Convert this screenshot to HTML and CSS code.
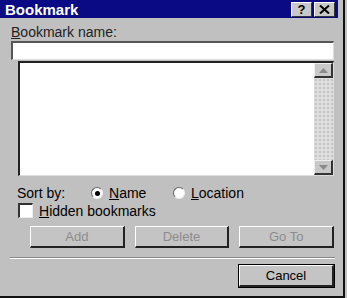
FILE: index.html
```html
<!DOCTYPE html>
<html lang="en">
  <head>
    <meta charset="UTF-8" />
    <title>Bookmark</title>
    <link rel="stylesheet" href="styles.css">
  </head>
  <body>
    <div class="dialog">
      <div class="title-bar">
        <span class="title">Bookmark</span>
        <div class="title-buttons">
          <span class="tb-btn">?</span>
          <span class="tb-btn close">
            <svg width="11" height="9" viewBox="0 0 11 9"><path d="M1 0.5 L10 8.5 M10 0.5 L1 8.5" stroke="#000" stroke-width="2"/></svg>
          </span>
        </div>
      </div>

      <div class="body">
        <label class="label"><u>B</u>ookmark name:</label>
        <div class="text-field"></div>

        <div class="list-box">
          <div class="list-area"></div>
          <div class="scrollbar">
            <span class="sb-btn">
              <svg width="9" height="5" viewBox="0 0 9 5"><path d="M0 5 L4.5 0 L9 5 Z" fill="#8a8a8a"/></svg>
            </span>
            <span class="sb-track"></span>
            <span class="sb-btn">
              <svg width="9" height="5" viewBox="0 0 9 5"><path d="M0 0 L4.5 5 L9 0 Z" fill="#8a8a8a"/></svg>
            </span>
          </div>
        </div>

        <div class="sort-row">
          <span class="sort-label">Sort by:</span>
          <span class="radio checked"></span>
          <span class="radio-label"><u>N</u>ame</span>
          <span class="radio"></span>
          <span class="radio-label"><u>L</u>ocation</span>
        </div>

        <div class="check-row">
          <span class="checkbox"></span>
          <span><u>H</u>idden bookmarks</span>
        </div>

        <div class="button-row">
          <span class="btn disabled">Add</span>
          <span class="btn disabled">Delete</span>
          <span class="btn disabled">Go To</span>
        </div>

        <div class="separator"></div>

        <div class="cancel-row">
          <span class="btn default">Cancel</span>
        </div>
      </div>
    </div>
  </body>
</html>
```

FILE: styles.css
```css
body {
  margin: 0;
  background-color: #c0c0c0;
  font-family: "Liberation Sans", Arial, sans-serif;
  font-size: 14px;
  color: #000;
}

.dialog {
  width: 343px;
  height: 296px;
  border-right: 2px solid #111;
  border-bottom: 2px solid #111;
  box-sizing: content-box;
  overflow: hidden;
}

.title-bar {
  width: 338px;
  height: 18px;
  background-color: #0a0a84;
  display: flex;
  align-items: center;
  justify-content: space-between;
}

.title {
  color: #fff;
  font-weight: bold;
  font-size: 15px;
  padding-left: 5px;
}

.title-buttons {
  display: flex;
  gap: 2px;
  padding-right: 3px;
}

.tb-btn {
  width: 21px;
  height: 15px;
  background-color: #c8c8c8;
  border-top: 1px solid #fff;
  border-left: 1px solid #fff;
  border-right: 1px solid #333;
  border-bottom: 1px solid #333;
  box-sizing: border-box;
  display: flex;
  align-items: center;
  justify-content: center;
  font-weight: bold;
  font-size: 13px;
  line-height: 1;
}

.body {
  padding: 6px 11px 0 11px;
  width: 323px;
}

.label {
  display: block;
  height: 17px;
  line-height: 17px;
  color: #222;
}

.text-field {
  height: 19px;
  background: #fff;
  border-top: 2px solid #555;
  border-left: 2px solid #555;
  border-right: 1px solid #ddd;
  border-bottom: 1px solid #ddd;
  box-sizing: border-box;
}

.list-box {
  margin: 1px 0 0 7px;
  height: 115px;
  display: flex;
  background: #fff;
  border-top: 2px solid #222;
  border-left: 2px solid #222;
  border-right: 1px solid #ddd;
  border-bottom: 1px solid #ddd;
  box-sizing: border-box;
}

.list-area {
  flex: 1;
}

.scrollbar {
  width: 19px;
  display: flex;
  flex-direction: column;
  background-color: #dcdcdc;
}

.sb-btn {
  height: 15px;
  background-color: #c8c8c8;
  border-top: 1px solid #eee;
  border-left: 1px solid #eee;
  border-right: 2px solid #333;
  border-bottom: 2px solid #333;
  box-sizing: border-box;
  display: flex;
  align-items: center;
  justify-content: center;
}

.sb-track {
  flex: 1;
  background-image: radial-gradient(#c4c4c4 30%, transparent 31%);
  background-size: 4px 4px;
  background-color: #dedede;
}

.sort-row {
  display: flex;
  align-items: center;
  height: 18px;
  margin: 8px 0 0 6px;
}

.sort-label {
  width: 74px;
}

.radio {
  width: 12px;
  height: 12px;
  border-radius: 50%;
  background: #fff;
  border: 1px solid #666;
  border-right-color: #eee;
  border-bottom-color: #eee;
  box-sizing: border-box;
  display: flex;
  align-items: center;
  justify-content: center;
  margin-right: 6px;
}

.radio.checked::after {
  content: "";
  width: 5px;
  height: 5px;
  border-radius: 50%;
  background: #000;
}

.radio-label {
  width: 64px;
}

.check-row {
  display: flex;
  align-items: center;
  gap: 6px;
  margin: 0 0 0 7px;
  height: 17px;
}

.checkbox {
  width: 15px;
  height: 15px;
  background: #fff;
  border-top: 2px solid #333;
  border-left: 2px solid #333;
  border-right: 1px solid #eee;
  border-bottom: 1px solid #eee;
  box-sizing: border-box;
}

.button-row {
  display: flex;
  gap: 10px;
  margin: 7px 0 0 19px;
}

.btn {
  height: 22px;
  width: 95px;
  background-color: #c4c4c4;
  border-top: 1px solid #fff;
  border-left: 1px solid #fff;
  border-right: 2px solid #222;
  border-bottom: 2px solid #222;
  box-sizing: border-box;
  display: flex;
  align-items: center;
  justify-content: center;
  font-size: 13px;
}

.btn.disabled {
  color: #8c8c8c;
}

.btn.default {
  outline: 1px solid #000;
  outline-offset: 0;
}

.separator {
  margin: 9px -1px 0 -1px;
  border-top: 1px solid #888;
  border-bottom: 1px solid #fff;
}

.cancel-row {
  display: flex;
  justify-content: flex-end;
  margin-top: 6px;
}
```
